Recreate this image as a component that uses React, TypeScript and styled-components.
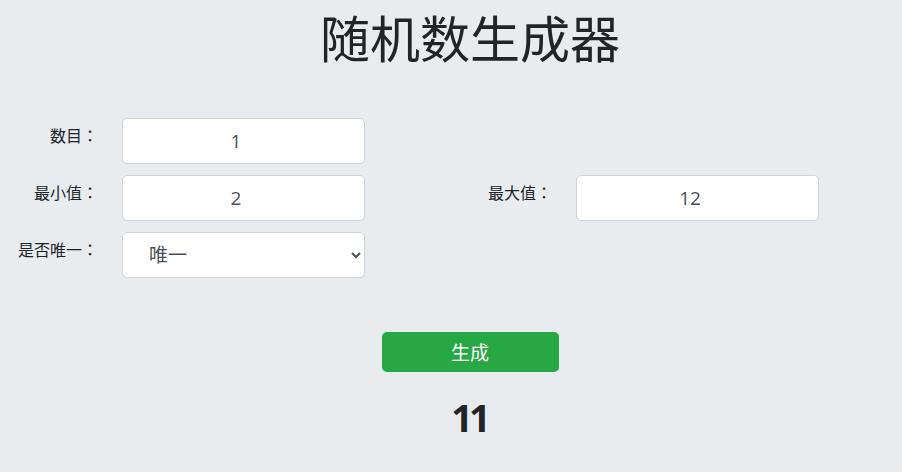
import styled, { createGlobalStyle } from 'styled-components';
import { useState } from 'react';

const GlobalStyle = createGlobalStyle`
    html, body {
        margin: 0;
        padding: 0;
        background: #e9ecef;
        overflow: hidden;
    }
    body {
        font-family: 'Open Sans', 'Noto Sans CJK SC', sans-serif;
        color: #212529;
    }
`;

const Page = styled.div`
    width: 902px;
    height: 472px;
    box-sizing: border-box;
`;

const Title = styled.h1`
    margin: 0;
    padding: 5px 0 0 38px;
    height: 68px;
    text-align: center;
    font-size: 50px;
    font-weight: 400;
    line-height: 68px;
    color: #212529;
`;

const Form = styled.div`
    margin-top: 45px;
    display: grid;
    grid-template-columns: 95px 243px 157px 243px;
    grid-auto-rows: 46px;
    column-gap: 27px;
    row-gap: 11px;
`;

const Label = styled.label`
    padding-top: 5px;
    margin-right: -3px;
    text-align: right;
    font-family: 'Noto Sans CJK JP', sans-serif;
    font-size: 16px;
    line-height: 24px;
    color: #212529;
    white-space: nowrap;
`;

const Field = styled.input`
    box-sizing: border-box;
    width: 243px;
    height: 46px;
    padding: 0 16px;
    border: 1px solid #ced4da;
    border-radius: 5px;
    background: #fff;
    font-family: inherit;
    font-size: 19px;
    color: #495057;
    text-align: center;
    outline: none;
`;

const Select = styled.select`
    box-sizing: border-box;
    width: 243px;
    height: 46px;
    padding: 0 6px 0 22px;
    border: 1px solid #ced4da;
    border-radius: 5px;
    background: #fff;
    font-family: inherit;
    font-size: 19px;
    color: #495057;
    outline: none;
`;

const Spacer = styled.div``;

const Actions = styled.div`
    margin-top: 54px;
    padding-left: 38px;
    display: flex;
    flex-direction: column;
    align-items: center;
`;

const GenerateButton = styled.button`
    width: 177px;
    height: 40px;
    border: none;
    border-radius: 5px;
    background: #28a745;
    color: #fff;
    font-family: inherit;
    font-size: 19px;
    cursor: pointer;
`;

const Result = styled.div`
    margin-top: 20px;
    font-size: 38px;
    font-weight: 700;
    line-height: 50px;
    color: #212529;
    letter-spacing: -4px;
    padding-right: 2px;
`;

export default function App() {
    const [count, setCount] = useState('1');
    const [min, setMin] = useState('2');
    const [max, setMax] = useState('12');
    const [unique, setUnique] = useState('unique');
    const [result, setResult] = useState('11');

    const generate = () => {
        const lo = Number(min);
        const hi = Number(max);
        const n = Math.max(1, Number(count) || 1);
        const picked: number[] = [];
        let guard = 0;
        while (picked.length < n && guard < 10000) {
            guard++;
            const v = Math.floor(Math.random() * (hi - lo + 1)) + lo;
            if (unique === 'unique' && picked.includes(v)) continue;
            picked.push(v);
        }
        setResult(picked.join(', '));
    };

    return (
        <Page>
            <GlobalStyle />
            <Title>随机数生成器</Title>
            <Form>
                <Label>数目：</Label>
                <Field type="number" value={count} onChange={e => setCount(e.target.value)} />
                <Spacer />
                <Spacer />

                <Label>最小值：</Label>
                <Field type="number" value={min} onChange={e => setMin(e.target.value)} />
                <Label>最大值：</Label>
                <Field type="number" value={max} onChange={e => setMax(e.target.value)} />

                <Label>是否唯一：</Label>
                <Select value={unique} onChange={e => setUnique(e.target.value)}>
                    <option value="unique">唯一</option>
                    <option value="repeat">可重复</option>
                </Select>
            </Form>
            <Actions>
                <GenerateButton onClick={generate}>生成</GenerateButton>
                <Result>{result}</Result>
            </Actions>
        </Page>
    );
}
